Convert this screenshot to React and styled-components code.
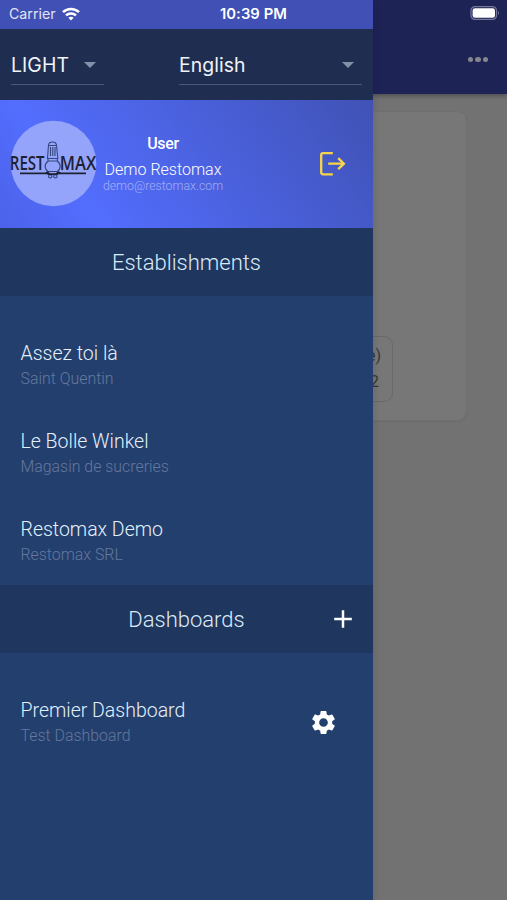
import React from "react";
import styled, { createGlobalStyle } from "styled-components";
import { MdSettings } from "react-icons/md";

const GlobalStyle = createGlobalStyle`
  * {
    box-sizing: border-box;
  }

  body {
    margin: 0;
    font-family: Roboto, "Liberation Sans", sans-serif;
    background: #727272;
  }
`

const Screen = styled.div`
  position: relative;
  width: 507px;
  height: 900px;
  overflow: hidden;
  background: #727272;
`

const PageHeader = styled.header`
  display: flex;
  justify-content: flex-end;
  height: 94px;
  padding: 6px 7px 0 0;
  background: #1e2356;
  box-shadow: 0 2px 4px rgba(0, 0, 0, 0.3);
`

const HeaderIcons = styled.div`
  display: flex;
  flex-direction: column;
  align-items: flex-end;
  gap: 37px;
`

const Dots = styled.div`
  display: flex;
  gap: 2px;
  margin-right: 12px;

  & > i {
    width: 5.4px;
    height: 5.4px;
    border-radius: 50%;
    background: #85868d;
  }
`

const PageCard = styled.div`
  display: flex;
  justify-content: flex-end;
  align-items: flex-end;
  width: 427px;
  height: 310px;
  margin: 17px 0 0 40px;
  padding: 0 73px 18px 0;
  background: #777777;
  border: 1px solid #6f6f6f;
  border-radius: 10px;
  box-shadow: 0 1px 1px rgba(0, 0, 0, 0.06);
`

const Chip = styled.div`
  width: 90px;
  height: 66px;
  padding: 6px 11px 0 0;
  border: 1px solid #6a6a6a;
  border-radius: 9px;
  font-size: 16px;
  line-height: 26px;
  text-align: right;
  color: #383838;

  & > div:last-child {
    padding-right: 2px;
  }
`

const Drawer = styled.aside`
  position: absolute;
  top: 0;
  left: 0;
  display: flex;
  flex-direction: column;
  width: 373px;
  height: 900px;
  background: #233f6d;
  box-shadow: 1px 0 8px rgba(0, 0, 0, 0.12);
`

const StatusBar = styled.div`
  display: flex;
  align-items: center;
  height: 29px;
  padding: 0 0 2px 9px;
  background: #4050b4;
  color: #ffffff;
  font-family: Inter, sans-serif;
`

const Carrier = styled.div`
  width: 53px;
  font-size: 14.2px;
  opacity: 0.85;
`

const Clock = styled.div`
  margin-left: 140px;
  font-size: 14.8px;
  font-weight: 600;
  letter-spacing: 0.05px;
  line-height: 20px;
`

const Selects = styled.div`
  display: flex;
  justify-content: space-between;
  align-items: flex-start;
  height: 71px;
  padding: 17px 11px 0 11px;
  background: #1f2e50;
`

const Select = styled.div`
  display: flex;
  align-items: center;
  justify-content: space-between;
  width: ${props => props.$width}px;
  height: 39px;
  padding: 0 8px 0 0;
  border-bottom: 1.5px solid #49597a;
  color: #f0f3f8;
  font-family: Inter, sans-serif;
  font-size: 19.4px;
  letter-spacing: ${props => props.$spacing || 0}px;
`

const Caret = styled.i`
  border: 6px solid transparent;
  border-top-color: #8390aa;
  border-bottom: 0;
`

const Profile = styled.section`
  display: flex;
  align-items: center;
  height: 128px;
  padding-left: 9px;
  background: linear-gradient(55deg, #4b62e8 0%, #536dfe 22%, #4052b5 100%);
  color: #ffffff;
`

const Identity = styled.div`
  display: flex;
  flex-direction: column;
  align-items: center;
  width: 130px;
  margin: 0 0 3px -1px;
`

const Role = styled.div`
  font-size: 16px;
  font-weight: 500;
  line-height: 22px;
  letter-spacing: -0.3px;
`

const Name = styled.div`
  margin-top: 4px;
  font-size: 16px;
  font-weight: 300;
  line-height: 22px;
  white-space: nowrap;
`

const Email = styled.div`
  margin-top: -1px;
  font-size: 12.3px;
  font-weight: 300;
  line-height: 13px;
  opacity: 0.45;
`

const LogoutIcon = styled.svg`
  margin-left: 91px;
`

const SectionTitle = styled.h2`
  display: grid;
  grid-template-columns: 1fr auto 1fr;
  align-items: center;
  height: 68px;
  margin: 0;
  padding: 0 20px 0 20px;
  background: #1f365e;
  color: #dcebf8;
  font-size: 22px;
  font-weight: 300;

  & > span {
    grid-column: 2;
  }

  & > svg {
    justify-self: end;
  }
`

const List = styled.div`
  height: ${props => props.$height}px;
  padding-top: 44px;
`

const Item = styled.div`
  display: flex;
  align-items: center;
  justify-content: space-between;
  height: 50px;
  margin-bottom: 38px;
  padding: 0 35px 0 20.5px;
  color: #ffffff;
`

const ItemName = styled.div`
  padding-top: 1px;
  color: #e4f1fc;
  font-size: 19.5px;
  font-weight: 300;
  line-height: 27px;
`

const ItemDetail = styled.div`
  color: #63789e;
  font-size: 15.9px;
  font-weight: 300;
  line-height: 24px;
`

const LogoSvg = styled.svg`
  flex: none;
  overflow: visible;
`

const Wifi = () => (
  <svg width="18" height="14" viewBox="0 0 18 14" fill="none" stroke="#fff" strokeWidth="2.5">
    <path d="M1 5.2C5.4 .8 12.6 .8 17 5.2" />
    <path d="M4 8.4C6.8 5.7 11.2 5.7 14 8.4" />
    <path d="M6.4 10.8C7.9 9.4 10.1 9.4 11.6 10.8L9 13.5Z" fill="#fff" stroke="none" />
  </svg>
)

const Battery = () => (
  <svg width="30" height="14" viewBox="0 0 30 14">
    <rect x="1" y=".6" width="25.5" height="12.8" rx="4" fill="none" stroke="#77799b" strokeWidth="1.2" />
    <rect x="2.6" y="2.2" width="22.4" height="9.6" rx="2.4" fill="#fff" />
    <path d="M28 5Q30 7 28 9Z" fill="#77799b" />
  </svg>
)

const Logo = () => (
  <LogoSvg width="90" height="88" viewBox="0 0 90 88">
    <circle cx="44.5" cy="43.5" r="42.8" fill="#95a4fb" />
    <g fill="#1d2233" fontFamily="Open Sans, sans-serif" fontWeight="600" fontSize="19.8">
      <text x="0.8" y="50" textLength="34.8" lengthAdjust="spacingAndGlyphs">REST</text>
      <text x="50.8" y="50" textLength="36.4" lengthAdjust="spacingAndGlyphs">MAX</text>
    </g>
    <g fill="none" stroke="#35467f" strokeWidth="1.1">
      <path d="M38.5 38.5L39.5 25Q40 22 43.5 22T47.5 25L48.8 38.5Z" />
      <path d="M39.5 25.5H47.6M41.5 27V36M43.8 27V36M46 27V36" />
      <path d="M39 38.5V41.2C34.5 44.5 36 49.5 39 51.5H48.3C51.5 49.5 52.7 44.5 48.4 41.2V38.5M39 41H48.5" />
      <circle cx="41.2" cy="56.3" r="1.7" />
      <circle cx="46.4" cy="56.3" r="1.7" />
    </g>
    <path d="M11 52.5H36L38.5 51.3L41 53.2H46.5L49.5 51.3L52 52.5H77V54.2H50L47.5 55H40L37.5 54.2H11Z" fill="#1d2233" />
  </LogoSvg>
)

const Logout = () => (
  <LogoutIcon width="27" height="26" viewBox="0 0 27 26" fill="none" stroke="#f8d548" strokeWidth="2.3">
    <path d="M13.8 2.1H4.2Q2.2 2.1 2.2 4.1V21.3Q2.2 23.3 4.2 23.3H13.8" />
    <path d="M9.2 12.7H24.5M19.2 7.2L24.9 12.7L19.2 18.2" />
  </LogoutIcon>
)

const Plus = () => (
  <svg width="20" height="20" viewBox="0 0 20 20" stroke="#fff" strokeWidth="2.5">
    <path d="M1.2 10H18.8M10 1.2V18.8" />
  </svg>
)

const establishments = [
  { name: "Assez toi là", detail: "Saint Quentin" },
  { name: "Le Bolle Winkel", detail: "Magasin de sucreries" },
  { name: "Restomax Demo", detail: "Restomax SRL" }
]

const Entry = ({ name, detail, children }) => (
  <Item>
    <div>
      <ItemName>{name}</ItemName>
      <ItemDetail>{detail}</ItemDetail>
    </div>
    {children}
  </Item>
)

const App = () => (
  <Screen>
    <GlobalStyle />
    <PageHeader>
      <HeaderIcons>
        <Battery />
        <Dots><i /><i /><i /></Dots>
      </HeaderIcons>
    </PageHeader>
    <PageCard>
      <Chip>
        <div>e)</div>
        <div>2</div>
      </Chip>
    </PageCard>
    <Drawer>
      <StatusBar>
        <Carrier>Carrier</Carrier>
        <Wifi />
        <Clock>10:39 PM</Clock>
      </StatusBar>
      <Selects>
        <Select $width={93} $spacing={0.1}>LIGHT <Caret /></Select>
        <Select $width={183} $spacing={0.05}>English <Caret /></Select>
      </Selects>
      <Profile>
        <Logo />
        <Identity>
          <Role>User</Role>
          <Name>Demo Restomax</Name>
          <Email>demo@restomax.com</Email>
        </Identity>
        <Logout />
      </Profile>
      <SectionTitle><span>Establishments</span></SectionTitle>
      <List $height={289}>
        {establishments.map(item => <Entry key={item.name} {...item} />)}
      </List>
      <SectionTitle><span>Dashboards</span><Plus /></SectionTitle>
      <List $height={247}>
        <Entry name="Premier Dashboard" detail="Test Dashboard">
          <MdSettings size={29} />
        </Entry>
      </List>
    </Drawer>
  </Screen>
);

export default App;
